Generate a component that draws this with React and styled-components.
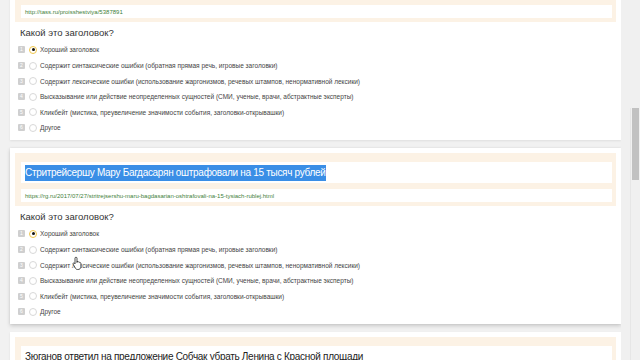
import styled, { createGlobalStyle } from "styled-components";

const GlobalStyle = createGlobalStyle`
  html, body {
    margin: 0;
    padding: 0;
    background: #f1f1f1;
    overflow: hidden;
  }
  body {
    font-family: "Liberation Sans", Arial, sans-serif;
  }
`;

const Page = styled.div`
  display: flex;
  width: 640px;
  height: 360px;
  overflow: hidden;
`;

const Viewport = styled.div`
  flex: 1;
  overflow: hidden;
  padding-left: 10px;
`;

const List = styled.div`
  display: flex;
  flex-direction: column;
  gap: 8px;
  margin-top: ${(p) => -p.$scroll}px;
`;

const Card = styled.div`
  position: relative;
  background: #fff;
  width: 611px;
  height: 176px;
  padding: 5px 5px 0;
  box-sizing: border-box;
  flex-shrink: 0;
  box-shadow: ${(p) =>
    p.$raised
      ? "0 2px 4px rgba(0,0,0,0.16), 0 0 2px rgba(0,0,0,0.08)"
      : "0 1px 2px rgba(0,0,0,0.08)"};
`;

const Header = styled.div`
  background: #fcf2e5;
  padding: 9px 4px 4px 6px;
  display: flex;
  flex-direction: column;
  gap: 6px;
`;

const TitleField = styled.div`
  background: #fff;
  height: 21px;
  display: flex;
  align-items: center;
  padding-left: 4px;
  font-size: 10px;
  letter-spacing: -0.3px;
  color: #222;
  white-space: nowrap;
  overflow: hidden;
`;

const Selected = styled.span`
  background: #3a8ee6;
  color: #fff;
  line-height: 16px;
`;

const UrlField = styled.div`
  background: #fff;
  height: 13px;
  display: flex;
  align-items: center;
  padding-left: 4px;
  font-size: 6px;
  color: #3f7f3a;
  white-space: nowrap;
`;

const Question = styled.div`
  font-size: 9.5px;
  color: #333;
  padding: 5px 0 0 5px;
  height: 15.2px;
  line-height: 12px;
`;

const Options = styled.div`
  display: flex;
  flex-direction: column;
  padding-left: 3px;
`;

const Option = styled.div`
  display: flex;
  align-items: center;
  height: 15.6px;
  font-size: 6.5px;
  color: #444;
  white-space: nowrap;
`;

const Badge = styled.span`
  width: 7px;
  height: 7px;
  background: #cfcfcf;
  color: #fff;
  font-size: 5px;
  line-height: 7px;
  text-align: center;
  border-radius: 1px;
  margin-right: 4px;
`;

const Radio = styled.span`
  width: 6px;
  height: 6px;
  border-radius: 50%;
  border: 1px solid ${(p) => (p.$checked ? "#f0c64a" : "#d8d8d8")};
  background: #fff;
  margin-right: 3px;
  display: flex;
  align-items: center;
  justify-content: center;
  &::after {
    content: "";
    width: 3px;
    height: 3px;
    border-radius: 50%;
    background: ${(p) => (p.$checked ? "#111" : "transparent")};
  }
`;

const Gutter = styled.div`
  width: 19px;
  background: #f0f0f0;
  display: flex;
  justify-content: flex-end;
  padding: 108px 1px 0 0;
  box-sizing: border-box;
`;

const Track = styled.div`
  width: 8px;
  border-left: 1px solid #e6e6e6;
  display: flex;
  justify-content: center;
`;

const Thumb = styled.div`
  width: 7px;
  height: 72px;
  background: #c1c1c1;
`;

const Cursor = styled.svg`
  position: absolute;
  left: 62px;
  top: 108px;
  width: 12px;
  height: 14px;
`;

const answers = [
  "Хороший заголовок",
  "Содержит синтаксические ошибки (обратная прямая речь, игровые заголовки)",
  "Содержит лексические ошибки (использование жаргонизмов, речевых штампов, ненормативной лексики)",
  "Высказывание или действие неопределенных сущностей (СМИ, ученые, врачи, абстрактные эксперты)",
  "Кликбейт (мистика, преувеличение значимости события, заголовки-открывашки)",
  "Другое",
];

const items = [
  {
    title: "Полиция задержала подозреваемого в нападении на прохожих",
    url: "http://tass.ru/proisshestviya/5387891",
  },
  {
    title: "Стритрейсершу Мару Багдасарян оштрафовали на 15 тысяч рублей",
    url: "https://rg.ru/2017/07/27/stritrejsershu-maru-bagdasarian-oshtrafovali-na-15-tysiach-rublej.html",
    selected: true,
    cursor: true,
  },
  {
    title: "Зюганов ответил на предложение Собчак убрать Ленина с Красной площади",
    url: "https://ria.ru/politics/",
  },
];

const HandCursor = () => (
  <Cursor viewBox="0 0 12 14">
    <path
      d="M4 1.2c.6 0 1 .4 1 1v4.3l.1-1c.6-.3 1.2 0 1.3.5.5-.3 1.2 0 1.3.6.6-.2 1.2.2 1.2.8v3.3c0 1.6-1.2 2.8-2.8 2.8H5.6c-.9 0-1.6-.4-2.1-1.1L1.2 8.3c-.4-.5-.2-1.1.3-1.3.4-.2.9 0 1.2.3L3 7.9V2.2c0-.6.4-1 1-1z"
      fill="#fff"
      stroke="#222"
      strokeWidth="0.8"
      strokeLinejoin="round"
    />
  </Cursor>
);

export default function App() {
  return (
    <>
      <GlobalStyle />
      <Page>
        <Viewport>
          <List $scroll={36}>
            {items.map((item, i) => (
              <Card key={i} $raised={item.selected}>
                <Header>
                  <TitleField>
                    {item.selected ? <Selected>{item.title}</Selected> : item.title}
                  </TitleField>
                  <UrlField>{item.url}</UrlField>
                </Header>
                <Question>Какой это заголовок?</Question>
                <Options>
                  {answers.map((a, j) => (
                    <Option key={j}>
                      <Badge>{j + 1}</Badge>
                      <Radio $checked={j === 0} />
                      {a}
                    </Option>
                  ))}
                </Options>
                {item.cursor && <HandCursor />}
              </Card>
            ))}
          </List>
        </Viewport>
        <Gutter>
          <Track>
            <Thumb />
          </Track>
        </Gutter>
      </Page>
    </>
  );
}
